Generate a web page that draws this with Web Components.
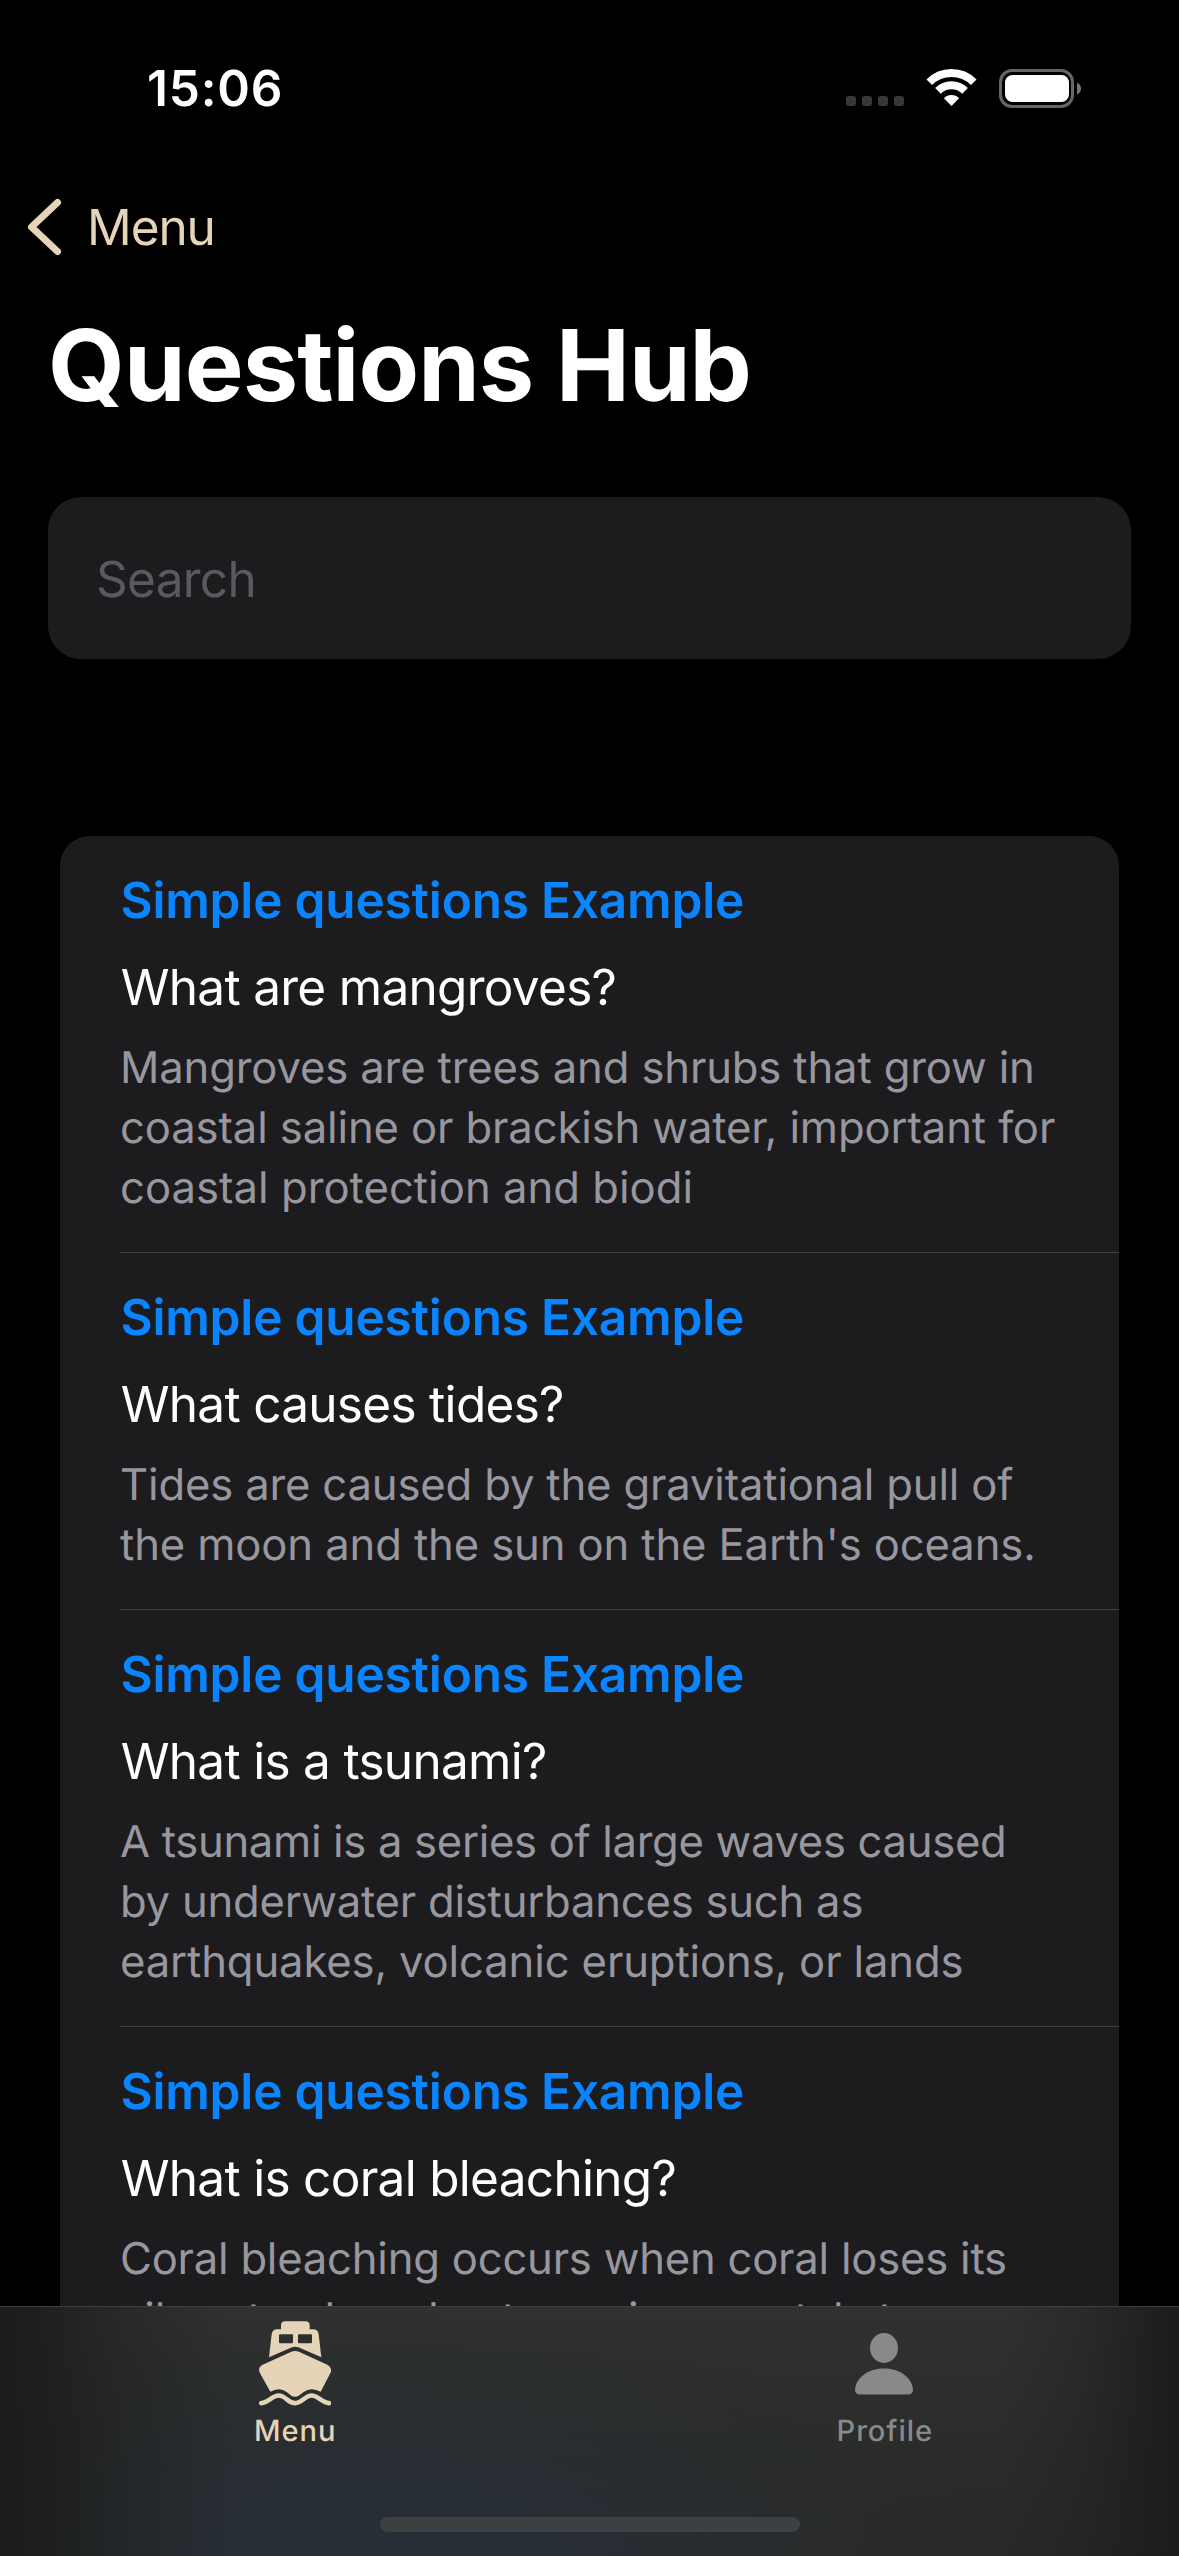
<!DOCTYPE html>
<html lang="en">
<head>
<meta charset="utf-8">
<title>Questions Hub</title>
<style>
html,body{margin:0;background:#000}
body{width:1179px;height:2556px;overflow:hidden;font-family:Inter,"Liberation Sans",sans-serif;color:#fff;text-rendering:geometricPrecision}
</style>
</head>
<body>
<app-screen>
  <status-bar slot="status">15:06</status-bar>
  <nav-back slot="nav">Menu</nav-back>
  <page-title slot="title">Questions Hub</page-title>
  <search-field slot="search">Search</search-field>
  <question-list>
    <question-item category="Simple questions Example">What are mangroves?
      <text-line slot="answer" tracking="-.14">Mangroves are trees and shrubs that grow in</text-line>
      <text-line slot="answer" tracking="-.12">coastal saline or brackish water, important for</text-line>
      <text-line slot="answer" tracking=".03">coastal protection and biodi</text-line>
    </question-item>
    <question-item category="Simple questions Example">What causes tides?
      <text-line slot="answer" tracking="-.157">Tides are caused by the gravitational pull of</text-line>
      <text-line slot="answer" tracking="-.116">the moon and the sun on the Earth's oceans.</text-line>
    </question-item>
    <question-item category="Simple questions Example">What is a tsunami?
      <text-line slot="answer" tracking="-.31">A tsunami is a series of large waves caused</text-line>
      <text-line slot="answer" tracking="-.22">by underwater disturbances such as</text-line>
      <text-line slot="answer" tracking="-.12">earthquakes, volcanic eruptions, or lands</text-line>
    </question-item>
    <question-item category="Simple questions Example">What is coral bleaching?
      <text-line slot="answer" tracking="-.216">Coral bleaching occurs when coral loses its</text-line>
      <text-line slot="answer" tracking="-.15">vibrant colors due to environmental stress</text-line>
    </question-item>
  </question-list>
  <tab-bar slot="tabs">
    <tab-item active>
      <svg slot="icon" width="72" height="85" viewBox="84 92.5 216 255" fill="currentColor">
        <path fill-rule="evenodd" d="M163 93.500H223Q236 93.500 236 106V117H246Q261 117 263 132L271 201L204 172Q192 167 181 172L114 201L122 132Q124 117 139 117H150V106Q150 93.500 163 93.500ZM147 132Q144 132 144 135V156Q144 159 147 159H183Q186 159 186 156V135Q186 132 183 132ZM204 132Q201 132 201 135V156Q201 159 204 159H240Q243 159 243 156V135Q243 132 240 132Z"/>
        <path d="M181 185Q192 180 204 185L289 224Q304 232 299 247L269 305Q240 289 217 306C205 315 200 320 192 320C184 320 179 315 168 306Q145 289 118 305L86 247Q80 232 95 224Z"/>
        <path d="M91 339C112 338 124 316 143 316C163 316 172 339 192 339C213 339 222 316 242 316C261 316 273 338 294 339" fill="none" stroke="currentColor" stroke-width="14" stroke-linecap="round"/>
      </svg>Menu</tab-item>
    <tab-item>
      <svg slot="icon" width="58" height="86" viewBox="0 0 58 86" fill="currentColor">
        <ellipse cx="29" cy="27" rx="14" ry="15"/>
        <path d="M5 73.500Q0 73.500 0 68.500C1 57.500 12 47.500 29 47.500C46 47.500 57 57.500 58 68.500Q58 73.500 53 73.500Z"/>
      </svg>Profile</tab-item>
  </tab-bar>
</app-screen>
<script>
const define = (name, html, init) => {
  const tpl = document.createElement('template');
  tpl.innerHTML = html;
  customElements.define(name, class extends HTMLElement {
    constructor() {
      super();
      this.attachShadow({mode: 'open'}).appendChild(tpl.content.cloneNode(true));
    }
    connectedCallback() { if (init) init(this); }
  });
};

define('app-screen', `<style>
:host{display:flex;flex-direction:column;width:1179px;height:2556px;background:#000;overflow:hidden}
.scroll{flex:1;min-height:0;overflow:hidden;padding:177px 60px 0}
</style>
<slot name="status"></slot><slot name="nav"></slot><slot name="title"></slot><slot name="search"></slot>
<div class="scroll"><slot></slot></div><slot name="tabs"></slot>`);

define('status-bar', `<style>
:host{display:flex;justify-content:space-between;height:119px;padding:58px 98px 0 147px;font-size:49.500px;line-height:60px;font-weight:600;letter-spacing:.8px}
.icons{display:flex;gap:22px;height:60px;align-items:center}
.dots{display:flex;gap:6px;margin-top:26px}
.dots i{width:10px;height:10px;border-radius:3px;background:#383838}
svg{display:block}
</style>
<span class="time"><slot></slot></span>
<div class="icons">
 <div class="dots"><i></i><i></i><i></i><i></i></div>
 <svg width="51" height="38" viewBox="0 0 51.200 38" fill="none" stroke="#fff" stroke-width="8">
  <path d="M3.300 13.200A31.500 31.500 0 0 1 47.900 13.200M12 21.900A19.200 19.200 0 0 1 39.200 21.900"/>
  <path d="M25.600 37L18 29.200A10.800 10.800 0 0 1 33.200 29.200Z" fill="#fff" stroke="none"/>
 </svg>
 <svg width="82" height="39" viewBox="0 0 82 39">
  <rect x="1.500" y="1.500" width="72" height="36" rx="11.500" fill="none" stroke="#666" stroke-width="3"/>
  <rect x="6" y="6" width="64" height="27" rx="7.500" fill="#fff"/>
  <path d="M78 13.500Q82 15.500 82 19.500T78 25.500Z" fill="#777"/>
 </svg>
</div>`);

define('nav-back', `<style>
:host{display:flex;align-items:center;height:100px;padding-left:27px;gap:25px;color:#e6d4b8;font-size:49.500px;line-height:60px;letter-spacing:-1.07px}
svg{display:block}
</style>
<svg width="35" height="58" viewBox="0 0 35 58" fill="none" stroke="currentColor" stroke-width="7" stroke-linecap="round" stroke-linejoin="round"><path d="M30.500 4.500L4.500 29L30.500 53.500"/></svg>
<span><slot></slot></span>`);

define('page-title', `<style>
:host{display:block;margin:28px 0 0 48px;font-size:98.900px;line-height:120px;font-weight:700;white-space:nowrap;letter-spacing:-.88px}
</style><slot></slot>`);

define('search-field', `<style>
:host{display:flex;align-items:center;height:162px;margin:72px 48px 0;padding:2px 48px 0;box-sizing:border-box;border-radius:33px;background:#1c1c1e;color:#5a5a5e;font-size:49.500px;line-height:60px;letter-spacing:-.72px}
</style><span><slot></slot></span>`);

define('question-list', `<style>
:host{display:block;background:#1c1c1e;border-radius:30px;overflow:hidden}
</style><slot></slot>`);

define('text-line', `<style>:host{display:block}</style><slot></slot>`,
 el => { el.style.letterSpacing = el.getAttribute('tracking') + 'px'; });

define('question-item', `<style>
:host{display:flex;flex-direction:column;margin-left:60px;padding:31px 0 34px;border-bottom:1px solid #3d3d40;white-space:nowrap}
.cat{padding-left:.4px;color:#0a84ff;font-weight:600;font-size:49.500px;line-height:66px;letter-spacing:-.164px}
.q{margin-top:21px;padding-left:.7px;font-size:49.500px;line-height:66px;letter-spacing:-.7px}
.a{margin-top:18px;color:#98979f;font-size:43.600px;line-height:60px}
</style><div class="cat"></div><div class="q"><slot></slot></div><div class="a"><slot name="answer"></slot></div>`,
 el => { el.shadowRoot.querySelector('.cat').textContent = el.getAttribute('category'); });

define('tab-bar', `<style>
:host{display:flex;flex-direction:column;flex:none;height:250px;box-sizing:border-box;border-top:1px solid #3d3d40;
background:
 linear-gradient(90deg,rgba(27,28,27,1) 0,rgba(27,28,27,.85) 40px,rgba(27,28,27,.4) 120px,rgba(27,28,27,0) 230px,rgba(27,28,27,0) 1000px,rgba(27,28,27,.3) 1080px,rgba(27,28,27,1) 1179px),
 radial-gradient(ellipse 600px 260px at 380px 260px,#262e37 0,rgba(39,46,53,.9) 35%,rgba(41,46,49,.5) 68%,rgba(41,46,47,0) 100%),
 linear-gradient(180deg,#303130,#2a2b2a 60%,#282828)}
.row{display:flex;flex:1}
.home{align-self:center;width:420px;height:15px;border-radius:8px;background:#3d4042;margin-bottom:24px}
</style><div class="row"><slot></slot></div><div class="home"></div>`);

define('tab-item', `<style>
:host{display:flex;flex:1;flex-direction:column;align-items:center;padding-top:14px;color:#888988;font-size:29.100px;line-height:36px;font-weight:500;letter-spacing:.95px}
:host([active]){color:#e6d4b8}
.i{height:86px;margin-bottom:7px}
.t{margin-right:-1px}
::slotted(svg){display:block}
</style><div class="i"><slot name="icon"></slot></div><span class="t"><slot></slot></span>`);
</script>
</body>
</html>
